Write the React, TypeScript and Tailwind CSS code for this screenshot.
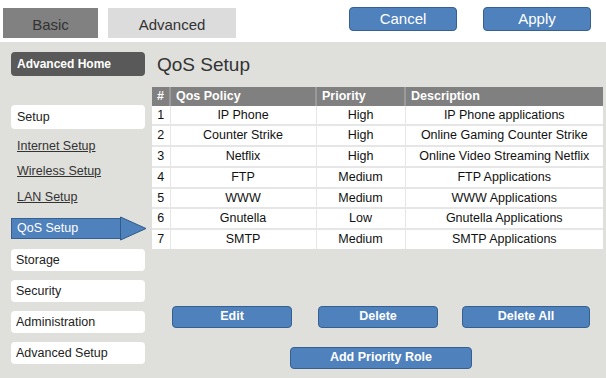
import React from "react";

const rows = [
  ["1", "IP Phone", "High", "IP Phone applications"],
  ["2", "Counter Strike", "High", "Online Gaming Counter Strike"],
  ["3", "Netflix", "High", "Online Video Streaming Netflix"],
  ["4", "FTP", "Medium", "FTP Applications"],
  ["5", "WWW", "Medium", "WWW Applications"],
  ["6", "Gnutella", "Low", "Gnutella Applications"],
  ["7", "SMTP", "Medium", "SMTP Applications"],
];

const blueBtn =
  "flex items-center justify-center rounded-[4px] border border-[#35608f] bg-[#4f81bd] text-white";

function SideBox({ label }: { label: string }) {
  return (
    <div className="flex h-[22px] w-[134px] items-center rounded-[4px] bg-white pl-[5px] text-[12.5px] text-[#222]">
      {label}
    </div>
  );
}

export default function App() {
  return (
    <div
      className="flex h-[378px] w-[606px] flex-col overflow-hidden bg-white"
      style={{ fontFamily: '"Liberation Sans", Arial, sans-serif' }}
    >
      {/* top bar */}
      <div className="flex h-[42px] items-start">
        <div className="ml-[3px] mt-[8px] flex h-[30px] w-[95px] items-center justify-center bg-[#818181] pt-[4px] text-[15px] text-[#333]">
          Basic
        </div>
        <div className="ml-[10px] mt-[8px] flex h-[30px] w-[128px] items-center justify-center bg-[#dcdcdc] pt-[4px] text-[15px] text-[#333]">
          Advanced
        </div>
        <div className={`${blueBtn} ml-[113px] mt-[7px] h-[24px] w-[108px] text-[15px]`}>Cancel</div>
        <div className={`${blueBtn} ml-[26px] mt-[7px] h-[24px] w-[108px] text-[15px]`}>Apply</div>
      </div>

      {/* main area */}
      <div className="flex flex-1 bg-[#dfdfdb]">
        {/* sidebar */}
        <div className="flex w-[152px] flex-col pl-[11px] pt-[10px]">
          <div className="flex h-[24px] w-[134px] items-center rounded-[4px] bg-[#595959] pl-[6px] text-[12px] font-bold text-white">
            Advanced Home
          </div>
          <div className="mt-[29px] flex h-[24px] w-[134px] items-center rounded-[4px] bg-white pl-[6px] text-[12.5px] text-[#222]">
            Setup
          </div>
          <div className="ml-[6px] mt-[8px] flex flex-col gap-[6.5px] text-[12.5px] text-[#333]">
            <span className="underline">Internet Setup</span>
            <span className="underline">Wireless Setup</span>
            <span className="underline">LAN Setup</span>
          </div>
          <div className="mt-[10px] flex h-[24px] items-center">
            <div className="flex h-[21px] w-[110px] items-center border-y border-l border-[#35608f] bg-[#4f81bd] pl-[5px] text-[12.5px] text-white">
              QoS Setup
            </div>
            <svg width="27" height="25" viewBox="0 0 27 25" className="-ml-[1px]">
              <polygon points="0.5,1 26,12.5 0.5,24" fill="#4f81bd" stroke="#2f5b86" strokeWidth="1" />
            </svg>
          </div>
          <div className="mt-[9px] flex flex-col gap-[9px]">
            <SideBox label="Storage" />
            <SideBox label="Security" />
            <SideBox label="Administration" />
            <SideBox label="Advanced Setup" />
          </div>
        </div>

        {/* content */}
        <div className="flex flex-1 flex-col">
          <div className="ml-[5px] mt-[9px] text-[19px] text-[#333]">QoS Setup</div>
          <table className="mt-[7px] w-[451px] border-collapse text-[12.5px] text-[#111]">
            <colgroup>
              <col className="w-[18px]" />
              <col className="w-[146px]" />
              <col className="w-[89px]" />
              <col className="w-[198px]" />
            </colgroup>
            <thead>
              <tr className="h-[19px] bg-[#808080] text-left font-bold text-white">
                <th className="border-r-2 border-[#9a9a9a] text-center">#</th>
                <th className="border-r-2 border-[#9a9a9a] pl-[5px]">Qos Policy</th>
                <th className="border-r-2 border-[#9a9a9a] pl-[5px]">Priority</th>
                <th className="pl-[5px]">Description</th>
              </tr>
            </thead>
            <tbody>
              {rows.map((r) => (
                <tr key={r[0]} className="h-[19px] border-b-2 border-[#e6e6e6] bg-white last:border-b-0">
                  <td className="border-r border-[#e6e6e6] text-center">{r[0]}</td>
                  <td className="border-r border-[#e6e6e6] text-center">{r[1]}</td>
                  <td className="border-r border-[#e6e6e6] text-center">{r[2]}</td>
                  <td className="text-center">{r[3]}</td>
                </tr>
              ))}
            </tbody>
          </table>
          <div className="mt-[57px] flex">
            <div className={`${blueBtn} ml-[20px] h-[22px] w-[120px] text-[12.5px] font-bold`}>Edit</div>
            <div className={`${blueBtn} ml-[26px] h-[22px] w-[120px] text-[12.5px] font-bold`}>Delete</div>
            <div className={`${blueBtn} ml-[24px] h-[22px] w-[128px] text-[12.5px] font-bold`}>Delete All</div>
          </div>
          <div className={`${blueBtn} ml-[138px] mt-[19px] h-[22px] w-[182px] text-[12.5px] font-bold`}>
            Add Priority Role
          </div>
        </div>
      </div>
    </div>
  );
}
